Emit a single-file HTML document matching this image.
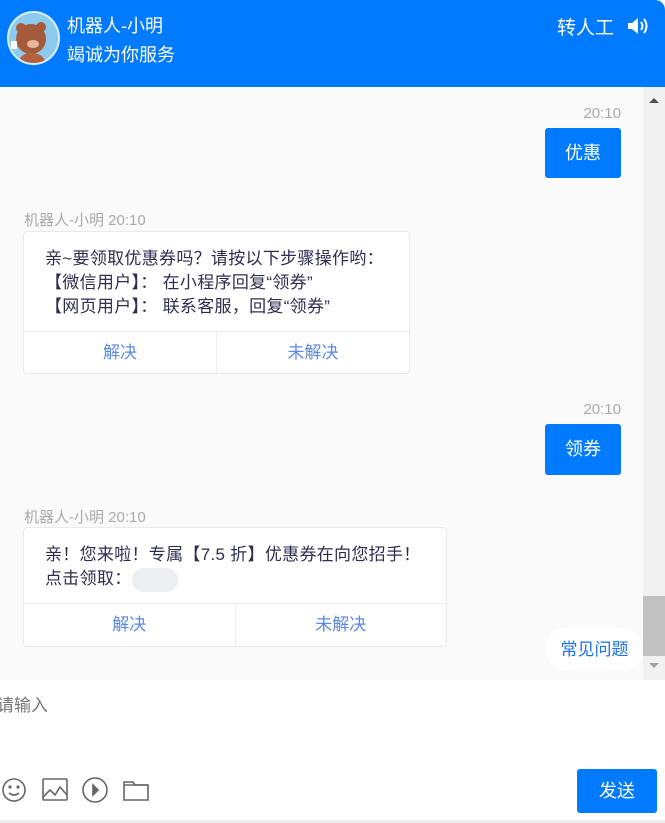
<!DOCTYPE html>
<html><head><meta charset="utf-8"><style>
*{margin:0;padding:0;box-sizing:border-box}
body{width:665px;height:823px;overflow:hidden;background:#fff;font-family:"Liberation Sans","Noto Sans CJK SC",sans-serif;position:relative}
.hd{position:absolute;left:0;top:0;width:665px;height:87px;background:#007bff;border-top-right-radius:10px;color:#fff}
.av{position:absolute;left:7px;top:11px;width:53px;height:54px;border-radius:50%;background:#8ccbee;overflow:hidden;border:2px solid #d9ecf7}
.chat{position:absolute;left:0;top:87px;width:643px;height:593px;background:#fafafa}
.sb{position:absolute;left:643px;top:87px;width:22px;height:593px;background:#f1f1f1}
.abs{position:absolute}
.time{color:#aaa;font-size:15px}
.rb{position:absolute;background:#007bff;color:#fff;font-size:18px;border-radius:3px;text-align:center;line-height:50px;width:76px}
.card{position:absolute;left:23px;background:#fff;border:1px solid #eaeaea;border-radius:4px;color:#2d2f4f;font-size:17px;letter-spacing:.3px}
.card .tx{padding:15px 10px 0 21px;line-height:24px;white-space:nowrap}
.btns{position:absolute;left:0;right:0;bottom:0;border-top:1px solid #eee;display:flex;color:#5b8ae8;font-size:17px;letter-spacing:0}
.btns div{flex:1;text-align:center}
.btns div+div{border-left:1px solid #eee}
</style></head><body>
<div class="hd">
 <div class="av"><svg width="53" height="54" viewBox="0 0 53 54"><circle cx="22" cy="26" r="15" fill="#a65a3c"/><circle cx="12" cy="15" r="5" fill="#a65a3c"/><circle cx="32" cy="14" r="5" fill="#a65a3c"/><ellipse cx="24" cy="31" rx="6" ry="4" fill="#e6b89c"/><path d="M8 54 Q10 40 22 40 Q36 40 38 54Z" fill="#b2603f"/><rect x="2" y="28" width="6" height="8" fill="#fff"/></svg></div>
 <div class="abs" style="left:67px;top:12px;font-size:18px">机器人-小明</div>
 <div class="abs" style="left:67px;top:41px;font-size:18px">竭诚为你服务</div>
 <div class="abs" style="left:557px;top:13px;font-size:19px">转人工</div>
 <svg class="abs" style="left:626px;top:16px" width="24" height="20" viewBox="0 0 24 20"><path d="M2 7h4l6-5v16l-6-5H2z" fill="#fff"/><path d="M15 6q3 4 0 8M18 3q5 7 0 14" stroke="#fff" stroke-width="2" fill="none"/></svg>
</div>
<div class="chat">
 <div class="abs time" style="right:22px;top:18px">20:10</div>
 <div class="rb" style="left:545px;top:41px">优惠</div>
 <div class="abs time" style="left:24px;top:122px">机器人-小明 20:10</div>
 <div class="card" style="top:144px;width:387px;height:143px">
  <div class="tx">亲~要领取优惠券吗？请按以下步骤操作哟：<br>【微信用户】： 在小程序回复“领券”<br>【网页用户】： 联系客服，回复“领券”</div>
  <div class="btns" style="height:42px;line-height:41px"><div>解决</div><div>未解决</div></div>
 </div>
 <div class="abs time" style="right:22px;top:314px">20:10</div>
 <div class="rb" style="left:545px;top:337px;height:51px">领券</div>
 <div class="abs time" style="left:24px;top:419px">机器人-小明 20:10</div>
 <div class="card" style="top:440px;width:424px;height:120px">
  <div class="tx">亲！您来啦！专属【7.5 折】优惠券在向您招手！<br>点击领取：<span style="display:inline-block;width:46px;height:24px;background:#eceef2;border-radius:12px;vertical-align:middle"></span></div>
  <div class="btns" style="height:43px;line-height:42px"><div>解决</div><div>未解决</div></div>
 </div>
 <div class="abs" style="left:546px;top:541px;width:97px;height:43px;border-radius:22px;background:#fff;color:#1a73e8;font-size:17px;line-height:43px;text-align:center">常见问题</div>
</div>
<div class="sb"><div class="abs" style="left:0;top:509px;width:22px;height:60px;background:#c1c1c1"></div>
<div class="abs" style="left:6px;top:11px;border:5px solid transparent;border-bottom:5px solid #505050;border-top:0"></div>
<div class="abs" style="left:6px;top:576px;border:5px solid transparent;border-top:5px solid #a0a0a0;border-bottom:0"></div></div>
<div class="abs" style="left:-3px;top:691px;color:#777;font-size:17px">请输入</div>
<svg class="abs" style="left:0;top:775px" width="155" height="30" viewBox="0 0 155 30" fill="none" stroke="#666" stroke-width="1.6">
<circle cx="14" cy="15" r="11"/><circle cx="10" cy="12" r=".8" fill="#666"/><circle cx="18" cy="12" r=".8" fill="#666"/><path d="M9 18q5 4 10 0"/>
<rect x="43" y="4" width="24" height="21" rx="1"/><path d="M43 22l7-7 5 5 5-8 7 8"/>
<circle cx="95" cy="15" r="12"/><path d="M93 10v10l5-5z" fill="#666"/>
<path d="M124 7h9l2 3h13v15h-24z"/><path d="M124 10h24"/>
</svg>
<div class="abs" style="left:577px;top:769px;width:80px;height:44px;background:#007bff;border-radius:3px;color:#fff;font-size:18px;line-height:44px;text-align:center">发送</div>
<div class="abs" style="left:0;top:820px;width:665px;height:3px;background:#eee"></div>
</body></html>
